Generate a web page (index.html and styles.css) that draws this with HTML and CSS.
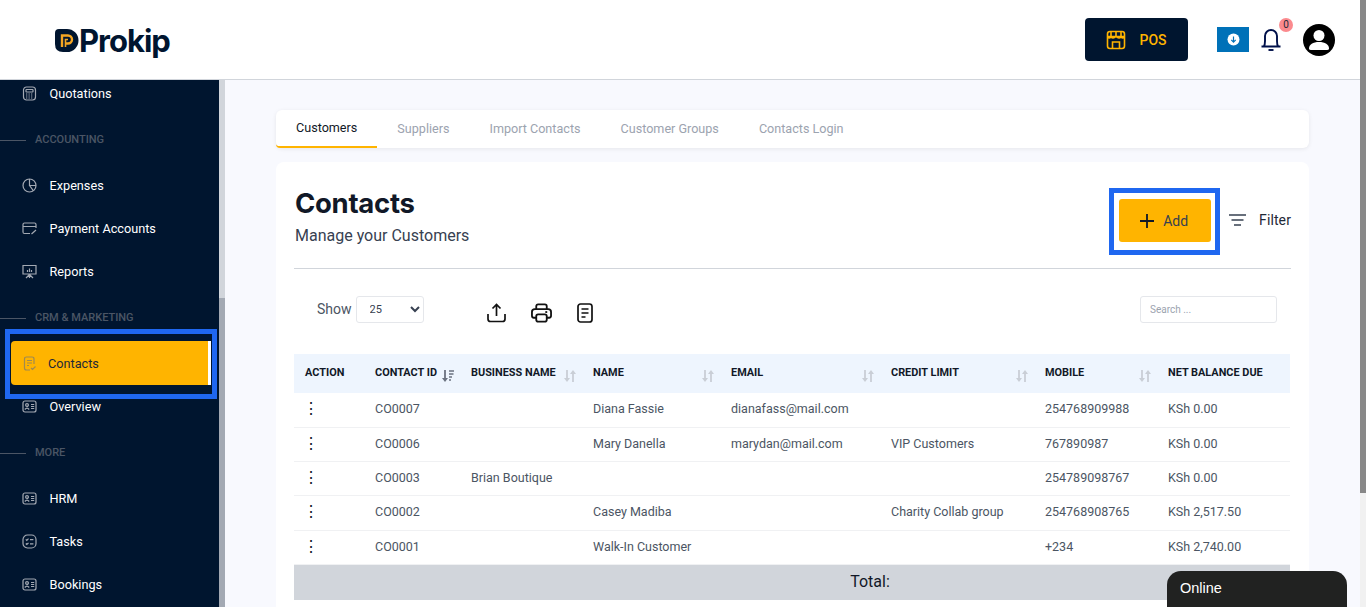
FILE: index.html
```html
<!DOCTYPE html>
<html lang="en">
<head>
  <meta charset="UTF-8">
  <meta name="viewport" content="width=device-width, initial-scale=1.0">
  <title>Contacts</title>
  <link rel="stylesheet" href="styles.css">
</head>
<body>

  <svg class="defs" width="0" height="0">
    <symbol id="sort" viewBox="0 0 12 12">
      <path d="M3 0v9" stroke="currentColor" stroke-width="1.800"/>
      <path d="M0 8h6l-3 4z" fill="currentColor"/>
      <path d="M9 3v9" stroke="currentColor" stroke-width="1.800"/>
      <path d="M6 4h6l-3-4z" fill="currentColor"/>
    </symbol>
    <symbol id="sort-on" viewBox="0 0 12 12">
      <path d="M3 0v9" stroke="currentColor" stroke-width="1.800"/>
      <path d="M0 8h6l-3 4z" fill="currentColor"/>
      <path d="M7 1h5M7 4h4.500M7 7h3M7 10h2" stroke="currentColor" stroke-width="1.500"/>
    </symbol>
    <symbol id="id-card" viewBox="0 0 15 15">
      <rect x="1" y="2" width="13" height="11" rx="2"/>
      <circle cx="5" cy="6" r="1.400"/>
      <path d="M2.800 10.500q2.200-2.600 4.400 0M9 5.500h3.200M9 7.500h3.200M9 9.500h3.200"/>
    </symbol>
  </svg>

  <div class="page">
    <header class="topbar">
      <div class="logo">
        <svg class="logo-mark" width="25" height="25" viewBox="0 0 25 25">
          <path d="M5 1h8a11.500 11.500 0 0 1 0 23H9q-8 0-8-8V5q0-4 4-4z" fill="#00152f"/>
          <path d="M8 19V7.500h6a4 4 0 0 1 0 8h-3" fill="none" stroke="#f5a623" stroke-width="2.400"/>
          <path d="M11.500 19v-7.500h2.500" fill="none" stroke="#f5a623" stroke-width="1.600"/>
        </svg>
        <span class="logo-text">Prokip</span>
      </div>
      <div class="topbar-right">
        <button class="pos-button">
          <svg width="20" height="20" viewBox="0 0 20 20" fill="none" stroke="#ffb400" stroke-width="1.600">
            <rect x="1.500" y="1.500" width="17" height="17" rx="2.500"/>
            <path d="M1.500 6.500h17M5 2v4.500M10 2v4.500M15 2v4.500M1.500 6.500q1.700 3 3.500 0q1.700 3 5 0q3.300 3 5 0q1.800 3 3.500 0"/>
            <path d="M6.500 18v-6h7v6"/>
          </svg>
          <span>POS</span>
        </button>
        <div class="download-box">
          <svg width="13" height="13" viewBox="0 0 13 13">
            <circle cx="6.500" cy="6.500" r="6" fill="#fff"/>
            <path d="M6.500 3.500v5.500M4.300 6.900l2.200 2.200 2.200-2.200" fill="none" stroke="#0071b8" stroke-width="1.200"/>
          </svg>
        </div>
        <div class="bell">
          <svg width="20" height="22" viewBox="0 0 20 22" fill="none" stroke="#00104a" stroke-width="1.900">
            <path d="M0.500 17.500h19M2.800 17.500c1.200-1.500 1.200-3 1.200-5.500V7a6 6 0 0 1 12 0v5c0 2.500 0 4 1.200 5.500"/>
            <path d="M7.500 21h5"/>
          </svg>
          <span class="badge">0</span>
        </div>
        <svg class="avatar" width="32" height="32" viewBox="0 0 32 32">
          <circle cx="16" cy="16" r="16" fill="#000"/>
          <circle cx="16" cy="11.500" r="5.500" fill="#fff"/>
          <path d="M6 24.500c0-4 4-6.500 10-6.500s10 2.500 10 6.500q0 1.500-2 1.500H8q-2 0-2-1.500z" fill="#fff"/>
        </svg>
      </div>
    </header>

    <div class="body-row">
      <aside class="sidebar">
        <nav class="side-nav">
          <a class="side-item">
            <svg class="side-icon" viewBox="0 0 15 15"><rect x="1.500" y="1" width="12" height="13" rx="3"/><rect x="4" y="3.500" width="7" height="2.500" rx="0.500"/><path d="M4 8h7M4 10h7M4 12h7" stroke-dasharray="1.300 1.200"/></svg>
            Quotations
          </a>
          <div class="side-label">ACCOUNTING</div>
          <a class="side-item">
            <svg class="side-icon" viewBox="0 0 15 15"><circle cx="7.500" cy="7.500" r="6.500"/><path d="M7.500 1v6.500h6.500M7.500 7.500l3.800 5.200"/></svg>
            Expenses
          </a>
          <a class="side-item">
            <svg class="side-icon" viewBox="0 0 15 15"><path d="M8 12.500H2.500q-1.500 0-1.500-1.500V3.500q0-1.500 1.500-1.500h10Q14 2 14 3.500V7M1 5.500h13M9.500 13l4.500-4"/></svg>
            Payment Accounts
          </a>
          <a class="side-item">
            <svg class="side-icon" viewBox="0 0 15 15"><path d="M1 1.500h13v8.500H1zM7.500 10v4M7.500 10.500l-3.500 3.500M7.500 10.500l3.500 3.500M5.500 8V6M7.500 8V4.500M9.500 8V6"/></svg>
            Reports
          </a>
          <div class="side-label">CRM &amp; MARKETING</div>
          <a class="side-item is-active">
            <span class="active-bar">
              <svg class="side-icon" viewBox="0 0 15 15"><path d="M12 8V3q0-2-2-2H4.500q-2 0-2 2v9q0 2 2 2h3.500M5 4.500h5M5 7h5M5 9.500h2M9 12l1.500 1.500 3-3"/></svg>
              Contacts
            </span>
          </a>
          <a class="side-item">
            <svg class="side-icon"><use href="#id-card"/></svg>
            Overview
          </a>
          <div class="side-label">MORE</div>
          <a class="side-item">
            <svg class="side-icon"><use href="#id-card"/></svg>
            HRM
          </a>
          <a class="side-item">
            <svg class="side-icon" viewBox="0 0 15 15"><rect x="1" y="1" width="13" height="13" rx="4.500"/><path d="M3.800 5.300l1 1 1.700-1.700M8 5.600h3.400M3.800 9.500l1 1 1.700-1.700M8 9.800h3.400"/></svg>
            Tasks
          </a>
          <a class="side-item">
            <svg class="side-icon"><use href="#id-card"/></svg>
            Bookings
          </a>
        </nav>
        <div class="side-scrollbar"></div>
      </aside>

      <main class="content">
        <div class="tabs">
          <a class="tab is-current">Customers</a>
          <a class="tab">Suppliers</a>
          <a class="tab">Import Contacts</a>
          <a class="tab">Customer Groups</a>
          <a class="tab">Contacts Login</a>
        </div>

        <section class="card">
          <div class="card-head">
            <div class="card-title">
              <h1>Contacts</h1>
              <p>Manage your Customers</p>
            </div>
            <div class="card-actions">
              <div class="add-outline">
                <button class="add-button">
                  <svg width="14" height="14" viewBox="0 0 14 14"><path d="M7 0v14M0 7h14" stroke="#111827" stroke-width="1.800"/></svg>
                  Add
                </button>
              </div>
              <a class="filter">
                <svg width="17" height="12" viewBox="0 0 17 12"><path d="M0 1h17M2.500 6h12M5 11h7" stroke="#374151" stroke-width="1.500"/></svg>
                Filter
              </a>
            </div>
          </div>

          <div class="tools">
            <label class="show">Show
              <select class="show-select"><option>25</option></select>
            </label>
            <div class="tool-icons">
              <svg width="19" height="20" viewBox="0 0 19 20" fill="none" stroke="#111" stroke-width="1.700">
                <path d="M9.500 13V2M5.500 5.500L9.500 1.500l4 4M1 11v5q0 2.500 2.500 2.500h12q2.500 0 2.500-2.500v-5"/>
              </svg>
              <svg width="21" height="20" viewBox="0 0 22 20" fill="none" stroke="#111" stroke-width="1.900">
                <path d="M5.500 6V3q0-2 2-2h7q2 0 2 2v3M5.500 15H3q-2 0-2-2V9q0-3 3-3h14q3 0 3 3v4q0 2-2 2h-2.500"/>
                <rect x="5.500" y="11.500" width="11" height="7.500" rx="2"/>
                <path d="M15 9h2"/>
              </svg>
              <svg width="16" height="20" viewBox="0 0 16 20" fill="none" stroke="#111" stroke-width="1.700">
                <rect x="1" y="1" width="14" height="18" rx="2.500"/>
                <path d="M4.500 6h7M4.500 10h7M4.500 14h4"/>
              </svg>
            </div>
            <input class="search" type="text" placeholder="Search ...">
          </div>

          <table class="contacts">
            <colgroup>
              <col class="c-action"><col class="c-id"><col class="c-biz"><col class="c-name"><col class="c-email"><col class="c-limit"><col class="c-mobile"><col class="c-net">
            </colgroup>
            <thead>
              <tr>
                <th>ACTION</th>
                <th><div class="th-sort">CONTACT ID <svg class="sort-icon is-on"><use href="#sort-on"/></svg></div></th>
                <th><div class="th-sort">BUSINESS NAME <svg class="sort-icon"><use href="#sort"/></svg></div></th>
                <th><div class="th-sort">NAME <svg class="sort-icon"><use href="#sort"/></svg></div></th>
                <th><div class="th-sort">EMAIL <svg class="sort-icon"><use href="#sort"/></svg></div></th>
                <th><div class="th-sort">CREDIT LIMIT <svg class="sort-icon"><use href="#sort"/></svg></div></th>
                <th><div class="th-sort">MOBILE <svg class="sort-icon"><use href="#sort"/></svg></div></th>
                <th>NET BALANCE DUE</th>
              </tr>
            </thead>
            <tbody>
              <tr><td class="dots">⋮</td><td>CO0007</td><td></td><td>Diana Fassie</td><td>dianafass@mail.com</td><td></td><td>254768909988</td><td>KSh 0.00</td></tr>
              <tr><td class="dots">⋮</td><td>CO0006</td><td></td><td>Mary Danella</td><td>marydan@mail.com</td><td>VIP Customers</td><td>767890987</td><td>KSh 0.00</td></tr>
              <tr><td class="dots">⋮</td><td>CO0003</td><td>Brian Boutique</td><td></td><td></td><td></td><td>254789098767</td><td>KSh 0.00</td></tr>
              <tr class="row-tall"><td class="dots">⋮</td><td>CO0002</td><td></td><td>Casey Madiba</td><td></td><td>Charity Collab group</td><td>254768908765</td><td>KSh 2,517.50</td></tr>
              <tr><td class="dots">⋮</td><td>CO0001</td><td></td><td>Walk-In Customer</td><td></td><td></td><td>+234</td><td>KSh 2,740.00</td></tr>
            </tbody>
            <tfoot>
              <tr><td colspan="8">Total:</td></tr>
            </tfoot>
          </table>
        </section>
      </main>
    </div>

    <div class="chat">Online</div>
    <div class="page-scrollbar"></div>
  </div>

</body>
</html>
```

FILE: styles.css
```css
* {
  box-sizing: border-box;
}

html, body {
  margin: 0;
  height: 100%;
  overflow: hidden;
}

body {
  font-family: Roboto, "Liberation Sans", sans-serif;
  font-size: 13px;
  color: #374151;
}

.defs {
  position: absolute;
}

.page {
  position: relative;
  height: 607px;
  padding-right: 6px;
  display: flex;
  flex-direction: column;
  overflow: hidden;
}

/* top bar */
.topbar {
  height: 80px;
  flex: none;
  background: #fff;
  border-bottom: 1px solid #d1d5db;
  display: flex;
  align-items: center;
  justify-content: space-between;
  padding: 0 25px 0 54px;
}

.logo {
  display: flex;
  align-items: center;
  margin-top: 2px;
}

.logo-text {
  font-family: Inter, sans-serif;
  font-size: 31px;
  font-weight: 700;
  letter-spacing: -1px;
  color: #00152f;
}

.topbar-right {
  display: flex;
  align-items: center;
}

.pos-button {
  width: 103px;
  height: 43px;
  background: #00152f;
  border: 0;
  border-radius: 4px;
  color: #ffb400;
  font: 500 14px Roboto, sans-serif;
  display: flex;
  align-items: center;
  justify-content: center;
  gap: 13px;
  margin-right: 29px;
}

.download-box {
  width: 32px;
  height: 25px;
  background: #0071b8;
  display: flex;
  align-items: center;
  justify-content: center;
  margin-right: 12px;
}

.bell {
  position: relative;
  height: 22px;
  margin-right: 22px;
}

.bell svg {
  display: block;
}

.badge {
  position: absolute;
  top: -11px;
  left: 18px;
  width: 14px;
  height: 14px;
  border-radius: 50%;
  background: #fb8a8e;
  color: #1f2937;
  font-size: 10px;
  line-height: 14px;
  text-align: center;
}

/* sidebar */
.body-row {
  flex: 1;
  display: flex;
  min-height: 0;
}

.sidebar {
  position: relative;
  width: 225px;
  flex: none;
  background: #00152f;
  padding-right: 6px;
  overflow: hidden;
}

.side-nav {
  margin-top: -8px;
}

.side-item {
  height: 43px;
  display: flex;
  align-items: center;
  gap: 12.500px;
  padding-left: 22px;
  color: #fff;
  font-size: 12.700px;
}

.side-icon {
  width: 15px;
  height: 15px;
  flex: none;
  fill: none;
  stroke: #a3a9b3;
  stroke-width: 1.200;
}

.side-label {
  height: 49px;
  display: flex;
  align-items: center;
  padding-left: 35px;
  position: relative;
  color: #4b5565;
  font-size: 11px;
  font-weight: 500;
}

.side-label::before {
  content: "";
  position: absolute;
  left: 0;
  top: 50%;
  width: 26px;
  border-top: 1px solid #4b5565;
}

.side-item.is-active {
  height: 70px;
  margin: -13px 2px -14px 5px;
  padding: 7px 0 9px 1px;
  border: 5px solid #1f67f0;
  position: relative;
}

.active-bar {
  flex: 1;
  height: 100%;
  display: flex;
  align-items: center;
  gap: 11px;
  padding-left: 11px;
  margin-right: 1px;
  background: #ffb400;
  color: #1f2937;
  border-right: 3px solid #fff;
  border-radius: 4px 0 0 4px;
}

.active-bar .side-icon {
  stroke: #a08a50;
}

.side-scrollbar {
  position: absolute;
  top: 0;
  right: 0;
  width: 6px;
  height: 100%;
  background: linear-gradient(#d1d5db 218px, #a3a9b3 218px);
}

/* main */
.content {
  flex: 1;
  min-width: 0;
  background: #f8f9fe;
  padding: 30px 51px 0 51px;
}

.tabs {
  height: 38px;
  background: #fff;
  border-radius: 6px;
  box-shadow: 0 1px 4px rgba(0, 0, 0, 0.08);
  display: flex;
  margin-bottom: 14px;
  font-size: 12.600px;
}

.tab {
  padding: 0 20px;
  line-height: 37px;
  color: #9ca3af;
}

.tab.is-current {
  color: #111827;
  line-height: 35px;
  height: 38px;
  border-bottom: 2px solid #ffb400;
  border-radius: 0 0 0 4px;
}

.card {
  background: #fff;
  border-radius: 8px 8px 0 0;
  padding: 0 18px;
  height: 460px;
}

.card-head {
  height: 107px;
  border-bottom: 1px solid #d1d5db;
  display: flex;
  justify-content: space-between;
}

.card-title {
  padding-left: 1px;
}

.card-head h1 {
  margin: 24px 0 0;
  font-size: 27.500px;
  line-height: 34px;
  font-weight: 700;
  color: #111827;
  font-family: Inter, sans-serif;
  letter-spacing: -0.300px;
}

.card-head p {
  margin: 6px 0 0;
  font-size: 16px;
  line-height: 20px;
}

.card-actions {
  display: flex;
  align-items: flex-start;
  gap: 9px;
  padding-top: 26px;
}

.add-outline {
  border: 5px solid #1f67f0;
  padding: 6px 4px 8px 5px;
}

.add-button {
  width: 92px;
  height: 43px;
  padding: 0 2px 0 0;
  background: #ffb400;
  border: 0;
  border-radius: 3px;
  color: #374151;
  font: 400 14px Roboto, sans-serif;
  display: flex;
  align-items: center;
  justify-content: center;
  gap: 9px;
}

.filter {
  display: flex;
  align-items: center;
  gap: 13px;
  height: 64px;
  font-size: 14px;
  letter-spacing: 0.100px;
  color: #1f2937;
}

.tools {
  display: flex;
  align-items: center;
  height: 85px;
  padding: 0 14px 5px 23px;
}

.show {
  display: flex;
  align-items: center;
  gap: 4px;
  font-size: 14px;
  color: #4b5563;
}

.show-select {
  width: 68px;
  height: 27px;
  padding-left: 9px;
  background: #fff;
  border: 1px solid #e5e7eb;
  border-radius: 3px;
  font: 11px Roboto, sans-serif;
  color: #374151;
}

.tool-icons {
  display: flex;
  align-items: center;
  gap: 25px;
  margin: 8px 0 0 63px;
  flex: 1;
}

.search {
  width: 137px;
  height: 27px;
  border: 1px solid #e5e7eb;
  border-radius: 3px;
  padding: 0 9px;
  font: 10px Roboto, sans-serif;
}

.search::placeholder {
  color: #9ca3af;
}

/* table */
.contacts {
  width: 996px;
  table-layout: fixed;
  border-collapse: collapse;
}

.c-action { width: 70px; }
.c-id { width: 96px; }
.c-biz { width: 122px; }
.c-name { width: 138px; }
.c-email { width: 160px; }
.c-limit { width: 154px; }
.c-mobile { width: 123px; }
.c-net { width: 133px; }

.contacts th {
  height: 39px;
  padding: 0 0 3px 11px;
  background: #eef5fe;
  color: #111827;
  font-size: 10.900px;
  font-weight: 700;
  text-align: left;
}

.th-sort {
  display: flex;
  align-items: center;
  justify-content: space-between;
  padding-right: 6px;
  white-space: nowrap;
}

.sort-icon {
  width: 12px;
  height: 12px;
  flex: none;
  margin-top: 7px;
  color: #c9ced6;
}

.sort-icon.is-on {
  color: #6b7280;
}

.contacts td {
  height: 34px;
  padding: 0 0 2px 11px;
  border-bottom: 1px solid #f0f1f3;
  color: #4b5563;
  font-size: 12.500px;
  white-space: nowrap;
}

.contacts .row-tall td {
  height: 35px;
}

.contacts td.dots {
  font-size: 16px;
  color: #111827;
  padding-left: 9px;
}

.contacts tfoot td {
  height: 36px;
  background: #d1d5db;
  color: #111827;
  font-size: 16px;
  text-align: center;
  border: 0;
  padding: 0 0 1px 156px;
}

/* chat + page scrollbar */
.chat {
  position: absolute;
  left: 1167px;
  top: 571px;
  width: 180px;
  height: 36px;
  background: #212221;
  border-radius: 14px 14px 0 0;
  color: #fff;
  font: 14.500px/34px "Liberation Sans", sans-serif;
  padding-left: 13px;
}

.page-scrollbar {
  position: absolute;
  top: 0;
  right: 0;
  width: 6px;
  height: 100%;
  background: linear-gradient(#888 493px, #f1f1f1 493px);
}
```
